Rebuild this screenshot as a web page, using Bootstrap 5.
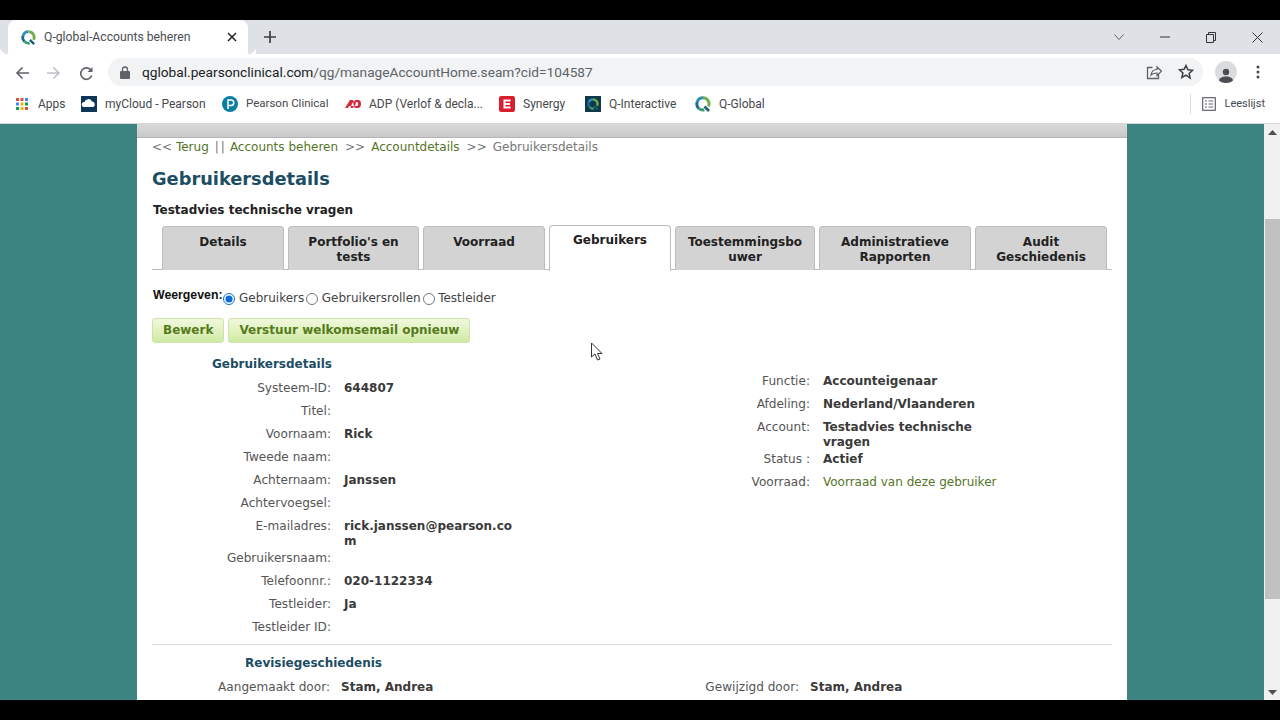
<!DOCTYPE html>
<html lang="nl">
<head>
<meta charset="utf-8">
<title>Q-global-Accounts beheren</title>
<link href="https://cdn.jsdelivr.net/npm/bootstrap@5.3.0/dist/css/bootstrap.min.css" rel="stylesheet">
<style>
html,body{height:720px;overflow:hidden;background:#000;margin:0}
.shell{height:720px;padding:20px 0;display:flex;flex-direction:column}
.ui{font-family:Roboto,"Liberation Sans",sans-serif;font-size:12px;color:#3c4043}
.tabstrip{height:34px;background:#dee1e6;padding-left:8px;flex:none}
.chrome-tab{width:240px;height:34px;background:#fff;border-radius:8px 8px 0 0;padding:0 11px 0 13px;position:relative}
.chrome-tab::before,.chrome-tab::after{content:"";position:absolute;bottom:0;width:8px;height:8px;background:radial-gradient(circle at 0 0,#dee1e6 8px,#fff 8.5px)}
.chrome-tab::after{left:100%}
.chrome-tab::before{right:100%;background:radial-gradient(circle at 100% 0,#dee1e6 8px,#fff 8.5px)}
.tabtitle{font-size:12.2px;color:#4a4d51;flex:1;margin-left:8px}
.newtab{margin-left:16px}
.winctl{gap:0;margin-left:auto}
.winbtn{width:46px;display:flex;justify-content:center}
.toolbar{height:34px;background:#fff;padding:4px 0 0 0;flex:none}
.navbtn{width:32px;display:flex;justify-content:center}
.navfirst{margin-left:6px}
.omni{width:1095px;height:28px;margin-left:6px;background:#f1f3f4;border-radius:14px;padding:0 9px 0 12px;font-size:14px}
.urltxt{margin-left:12px;color:#5f6368;font-size:13.7px;padding-top:1px}
.urltxt b{font-weight:400;color:#202124}
.omni-end{margin-left:auto;gap:16px}
.profile{width:22px;height:22px;border-radius:50%;background:#dadce0;margin-left:12px;overflow:hidden;margin-bottom:2px}
.kebab{margin-left:19px;margin-bottom:2px}
.bookmarks{height:35px;background:#fff;flex:none;padding:0 0 3px 14px;font-size:12px;color:#45484c;white-space:nowrap}
.bm{display:flex;align-items:center;gap:8px}
.bm svg{flex:none}
.bm1{width:67px}.bm2{width:141px}.bm3{width:123px}.bm4{width:154px}.bm5{width:86px}.bm6{width:110px}
.narrowtxt{font-size:11.5px}
.readlist{margin-left:auto;border-left:1px solid #dadce0;height:20px;padding:0 15px 0 11px;gap:8px;font-size:11px}
.viewport{flex:1;min-height:0;background:#3b8481;display:flex;position:relative;border-top:1px solid #d6d6d6}
.gutter{flex:1}
.pagecol{width:990px;background:#fff;overflow:hidden;font-family:"DejaVu Sans",sans-serif;font-size:12px;color:#555;line-height:15px}
.sbar{width:16px;background:#f1f1f1;display:flex;flex-direction:column;align-items:center;justify-content:space-between;padding:6px 0 5px;position:relative}
.sthumb{position:absolute;left:1px;right:0;top:95px;height:380px;background:#c1c1c1}
.topband{height:14px;background:linear-gradient(#dadada,#c9c9c9);border-bottom:1px solid #b5b5b5}
.content{padding:2px 15px 0 15px}
.crumbs{color:#777;height:16px;display:flex;white-space:pre}
.crumbs a,.lnk{color:#557528;text-decoration:none}
.crumbs .sp{margin:0 6px 0 7px}
.crumbs .bars{margin:0 3px 0 6px;letter-spacing:2px}
.ptitle{font-size:17.8px;font-weight:700;color:#1c4d63;margin:12px 0 0;line-height:22px}
.acct{font-weight:700;color:#222;margin:12px 0 0 1px;line-height:16px}
.tabbar{display:grid;grid-template-columns:122px 131px 122px 122px 140px 152px 132px;column-gap:4px;margin-top:7px;padding-left:10px;border-bottom:1px solid #bdbdbd;height:45px;align-items:end;list-style:none;margin-bottom:0;padding-right:4px}
.qtab{height:44px;background:#d3d3d3;border:1px solid #bdbdbd;border-bottom:0;border-radius:4px 4px 0 0;color:#222;font-weight:700;text-align:center;padding:8px 9px 0;line-height:15px}
.qtab span{overflow-wrap:anywhere}
.qtab.on{background:#fff;height:46px;margin-bottom:-1px;padding-top:7px}
.viewsel{margin-top:20px;height:20px;color:#444;display:flex;white-space:nowrap}
.viewsel strong{font-family:"Liberation Sans",sans-serif;font-size:12.3px;color:#111;position:relative;top:-2px;margin:0 -1px 0 1px}
.viewsel input{width:12px;height:12px;margin:3px 3px 0 2px;accent-color:#0b6fd6}
.viewsel label{margin:1px 0 0 .5px}
.actions{margin-top:8px;gap:4px}
.gbtn{height:25px;padding:0 10px;font-size:12px;font-weight:700;color:#557a1c;border:1px solid #cfe2ab;border-radius:3px;background:linear-gradient(#f1f8de,#d0eba3);line-height:23px;--bs-btn-hover-color:#557a1c}
.detailwrap{display:flex}
.leftd{width:360px;margin-top:14px}
.rightd{margin-top:27px;margin-left:221px;width:290px}
.sect{font-weight:700;color:#1c4d63;line-height:15px}
.lefthead{padding-left:60px;margin-bottom:5px}
.rw{display:flex;min-height:23px;padding:4px 0 0}
.rw.wrapd{height:32px}
.lab{text-align:right;flex:none;padding-right:13px;white-space:nowrap;font-size:12.1px}
.leftd .lab{width:192px}
.rightd .lab{width:90px}
.val{font-weight:700;color:#3a3a3a;overflow-wrap:anywhere}
.leftd .val{width:168px}
.rightd .val{width:190px}
.divider{border-top:1px solid #ddd;margin:5px 0 0;height:0}
.revhead{padding-left:93px;margin-top:11px}
.revrow{display:flex;margin-top:9px}
.revrow .lab{padding-right:11px}
.rl1{width:189px}
.rv1{width:349px}
.rl2{width:120px}
.cursor{position:absolute;left:590px;top:218px}
</style>
</head>
<body>
<svg width="0" height="0" class="d-block position-absolute">
  <symbol id="qlogo" viewBox="0 0 16 16">
    <path d="M8 1.8a6 6 0 0 0-5.7 4" fill="none" stroke="#2c8fc0" stroke-width="3"/>
    <path d="M2.3 5.8a6 6 0 0 0 1.4 6.5" fill="none" stroke="#1d6d8c" stroke-width="3"/>
    <path d="M3.7 12.3a6 6 0 0 0 5.6 1.6" fill="none" stroke="#3d9a6c" stroke-width="3"/>
    <path d="M8 1.8a6 6 0 0 1 5.4 8.6" fill="none" stroke="#6fb04a" stroke-width="3"/>
    <path d="M9.5 10.5l4.5 4.5" stroke="#1d5f7a" stroke-width="2.6"/>
  </symbol>
</svg>
<div class="shell">
  <div class="ui tabstrip d-flex align-items-center">
    <div class="chrome-tab d-flex align-items-center">
      <svg width="15" height="15"><use href="#qlogo"/></svg>
      <span class="tabtitle">Q-global-Accounts beheren</span>
      <svg width="10" height="10" viewBox="0 0 10 10"><path d="M1 1l8 8M9 1l-8 8" stroke="#202124" stroke-width="1.5"/></svg>
    </div>
    <svg class="newtab" width="12" height="12" viewBox="0 0 12 12"><path d="M6 0v12M0 6h12" stroke="#3c4043" stroke-width="1.7"/></svg>
    <div class="winctl d-flex align-items-center">
      <div class="winbtn"><svg width="10" height="6" viewBox="0 0 10 6"><path d="M.5.5L5 5.5 9.500.5" fill="none" stroke="#5f6368"/></svg></div>
      <div class="winbtn"><svg width="10" height="2" viewBox="0 0 10 2"><path d="M0 1h10" stroke="#333"/></svg></div>
      <div class="winbtn"><svg width="10" height="11" viewBox="0 0 10 11"><path d="M.5 2.500h7v8h-7zM2.500 2.500v-2h7v8h-2" fill="none" stroke="#333"/></svg></div>
      <div class="winbtn"><svg width="11" height="11" viewBox="0 0 11 11"><path d="M.5.5l10 10M10.500.5l-10 10" stroke="#333"/></svg></div>
    </div>
  </div>
  <div class="ui toolbar d-flex">
    <div class="navbtn navfirst align-items-center"><svg width="14" height="14" viewBox="0 0 14 14"><path d="M14 7H2M7.500 1.500L2 7l5.500 5.500" fill="none" stroke="#5f6368" stroke-width="1.6"/></svg></div>
    <div class="navbtn align-items-center"><svg width="14" height="14" viewBox="0 0 14 14"><path d="M0 7h12M6.500 1.500L12 7l-5.500 5.500" fill="none" stroke="#bdc1c6" stroke-width="1.6"/></svg></div>
    <div class="navbtn align-items-center"><svg width="15" height="15" viewBox="0 0 15 15"><path d="M12.800 9.500a5.700 5.700 0 1 1-.8-5.300" fill="none" stroke="#5f6368" stroke-width="1.6"/><path d="M13.500 1v5h-5z" fill="#5f6368"/></svg></div>
    <div class="omni d-flex align-items-center">
      <svg width="10" height="13" viewBox="0 0 10 13"><path d="M2.500 6V3.500a2.500 2.500 0 0 1 5 0V6" fill="none" stroke="#5f6368" stroke-width="1.300"/><rect y="5" width="10" height="8" rx="1" fill="#5f6368"/></svg>
      <span class="urltxt"><b>qglobal.pearsonclinical.com</b>/qg/manageAccountHome.seam?cid=104587</span>
      <div class="omni-end d-flex align-items-center">
        <svg width="16" height="15" viewBox="0 0 16 15"><path d="M6.500 2.500H1.500v11h11V9" fill="none" stroke="#5f6368" stroke-width="1.300"/><path d="M5 10c.5-3.500 3-5.500 6-5.500V2l4.500 4.200L11 10.500V8c-2.500 0-4.500.5-6 2z" fill="none" stroke="#5f6368" stroke-width="1.200"/></svg>
        <svg width="16" height="16" viewBox="0 0 16 16"><path d="M8 1.500l1.900 4.300 4.700.5-3.500 3.100 1 4.600L8 11.100l-4.100 2.400 1-4.600-3.500-3.100 4.700-.5z" fill="none" stroke="#3c4043" stroke-width="1.500"/></svg>
      </div>
    </div>
    <div class="profile d-flex justify-content-center align-items-end align-self-center"><svg width="14" height="15" viewBox="0 0 14 15"><circle cx="7" cy="4" r="3.200" fill="#4a4d51"/><path d="M0 13c0-3 3-4.500 7-4.500s7 1.500 7 4.500v2H0z" fill="#4a4d51"/></svg></div>
    <svg class="kebab align-self-center" width="4" height="14" viewBox="0 0 4 14"><circle cx="2" cy="2" r="1.500" fill="#45484c"/><circle cx="2" cy="7" r="1.500" fill="#45484c"/><circle cx="2" cy="12" r="1.500" fill="#45484c"/></svg>
  </div>
  <div class="ui bookmarks d-flex align-items-center">
    <div class="bm bm1"><svg width="16" height="16" viewBox="0 0 16 16"><g><rect x="2" y="2" width="3" height="3" fill="#d9503f"/><rect x="6.500" y="2" width="3" height="3" fill="#d9503f"/><rect x="11" y="2" width="3" height="3" fill="#4285f4"/><rect x="2" y="6.500" width="3" height="3" fill="#4285f4"/><rect x="6.500" y="6.500" width="3" height="3" fill="#f4b400"/><rect x="11" y="6.500" width="3" height="3" fill="#0f9d58"/><rect x="2" y="11" width="3" height="3" fill="#0f9d58"/><rect x="6.500" y="11" width="3" height="3" fill="#f4b400"/><rect x="11" y="11" width="3" height="3" fill="#d9503f"/></g></svg><span>Apps</span></div>
    <div class="bm bm2"><svg width="16" height="16" viewBox="0 0 16 16"><rect width="16" height="16" fill="#0d3557"/><path d="M3 11a2.500 2.500 0 0 1 .5-5 4 4 0 0 1 7.500-.5 3 3 0 0 1 1.500 5.500z" fill="#fff"/></svg><span>myCloud - Pearson</span></div>
    <div class="bm bm3"><svg width="16" height="16" viewBox="0 0 16 16"><circle cx="8" cy="8" r="8" fill="#0c7ea0"/><path d="M6 13V4h3a2.500 2.500 0 0 1 0 5.500H6" fill="none" stroke="#fff" stroke-width="1.500"/></svg><span class="narrowtxt">Pearson Clinical</span></div>
    <div class="bm bm4"><svg width="16" height="16" viewBox="0 0 16 16"><path d="M0 12L5 4h3l1 2 1-2h3c2.500 0 3 2 3 4s-1 4-3 4h-3l-1-2-1 2H6L5.500 10H4L3 12z" fill="#d8283c"/><path d="M6 10l2-4 1 4zM11 6l-1 4h2c1.500 0 1.500-4 0-4z" fill="#fff"/></svg><span>ADP (Verlof &amp; decla...</span></div>
    <div class="bm bm5"><svg width="16" height="16" viewBox="0 0 16 16"><rect width="16" height="16" rx="2" fill="#d71f2e"/><path d="M4.500 3.500h7v2h-5v1.500h4.500v2H6.500v1.500h5v2h-7z" fill="#fff"/></svg><span>Synergy</span></div>
    <div class="bm bm6"><svg width="16" height="16" viewBox="0 0 16 16"><rect width="16" height="16" fill="#11384a"/><svg x="2" y="2" width="12" height="12"><use href="#qlogo"/></svg></svg><span>Q-Interactive</span></div>
    <div class="bm"><svg width="16" height="16"><use href="#qlogo"/></svg><span>Q-Global</span></div>
    <div class="readlist d-flex align-items-center">
      <svg width="14" height="14" viewBox="0 0 14 14"><rect x=".7" y=".7" width="12.600" height="12.600" fill="none" stroke="#5f6368" stroke-width="1.200"/><path d="M3 4h2M3 7h2M3 10h2M6.500 4H11M6.500 7H11M6.500 10H11" stroke="#5f6368" stroke-width="1.200"/></svg>
      <span>Leeslijst</span>
    </div>
  </div>
  <div class="viewport">
    <div class="gutter"></div>
    <main class="pagecol">
      <div class="topband"></div>
      <div class="content">
        <div class="crumbs"><span>&lt;&lt; </span><a href="#">Terug</a><span class="bars">||</span><a href="#">Accounts beheren</a><span class="sp">&gt;&gt;</span><a href="#">Accountdetails</a><span class="sp">&gt;&gt;</span><span>Gebruikersdetails</span></div>
        <h1 class="ptitle">Gebruikersdetails</h1>
        <div class="acct">Testadvies technische vragen</div>
        <ul class="tabbar">
          <li class="qtab"><span>Details</span></li>
          <li class="qtab"><span>Portfolio's en tests</span></li>
          <li class="qtab"><span>Voorraad</span></li>
          <li class="qtab on"><span>Gebruikers</span></li>
          <li class="qtab"><span>Toestemmingsbouwer</span></li>
          <li class="qtab"><span>Administratieve Rapporten</span></li>
          <li class="qtab"><span>Audit Geschiedenis</span></li>
        </ul>
        <div class="viewsel"><strong>Weergeven:</strong><input type="radio" name="v" id="r1" checked><label for="r1">Gebruikers</label><input type="radio" name="v" id="r2"><label for="r2">Gebruikersrollen</label><input type="radio" name="v" id="r3"><label for="r3">Testleider</label></div>
        <div class="actions d-flex">
          <button type="button" class="btn gbtn">Bewerk</button>
          <button type="button" class="btn gbtn">Verstuur welkomsemail opnieuw</button>
        </div>
        <div class="detailwrap">
          <div class="leftd">
            <div class="sect lefthead">Gebruikersdetails</div>
            <div class="rw"><div class="lab">Systeem-ID:</div><div class="val">644807</div></div>
            <div class="rw"><div class="lab">Titel:</div><div class="val"></div></div>
            <div class="rw"><div class="lab">Voornaam:</div><div class="val">Rick</div></div>
            <div class="rw"><div class="lab">Tweede naam:</div><div class="val"></div></div>
            <div class="rw"><div class="lab">Achternaam:</div><div class="val">Janssen</div></div>
            <div class="rw"><div class="lab">Achtervoegsel:</div><div class="val"></div></div>
            <div class="rw wrapd"><div class="lab">E-mailadres:</div><div class="val">rick.janssen@pearson.com</div></div>
            <div class="rw"><div class="lab">Gebruikersnaam:</div><div class="val"></div></div>
            <div class="rw"><div class="lab">Telefoonnr.:</div><div class="val">020-1122334</div></div>
            <div class="rw"><div class="lab">Testleider:</div><div class="val">Ja</div></div>
            <div class="rw"><div class="lab">Testleider ID:</div><div class="val"></div></div>
          </div>
          <div class="rightd">
            <div class="rw"><div class="lab">Functie:</div><div class="val">Accounteigenaar</div></div>
            <div class="rw"><div class="lab">Afdeling:</div><div class="val">Nederland/Vlaanderen</div></div>
            <div class="rw wrapd"><div class="lab">Account:</div><div class="val">Testadvies technische vragen</div></div>
            <div class="rw"><div class="lab">Status :</div><div class="val">Actief</div></div>
            <div class="rw"><div class="lab">Voorraad:</div><div><a class="lnk" href="#">Voorraad van deze gebruiker</a></div></div>
          </div>
        </div>
        <div class="divider"></div>
        <div class="sect revhead">Revisiegeschiedenis</div>
        <div class="revrow">
          <div class="lab rl1">Aangemaakt door:</div><div class="val rv1">Stam, Andrea</div>
          <div class="lab rl2">Gewijzigd door:</div><div class="val">Stam, Andrea</div>
        </div>
      </div>
    </main>
    <div class="gutter"></div>
    <div class="sbar">
      <svg width="9" height="5" viewBox="0 0 9 5"><path d="M4.500 0L9 5H0z" fill="#505050"/></svg>
      <div class="sthumb"></div>
      <svg width="9" height="5" viewBox="0 0 9 5"><path d="M4.500 5L9 0H0z" fill="#505050"/></svg>
    </div>
    <svg class="cursor" width="14" height="19" viewBox="0 0 14 19"><path d="M1.500 1v14l3.500-3 2.500 6 2.500-1-2.500-5.500h4.500z" fill="#fff" stroke="#333" stroke-width="1"/></svg>
  </div>
</div>
</body>
</html>
